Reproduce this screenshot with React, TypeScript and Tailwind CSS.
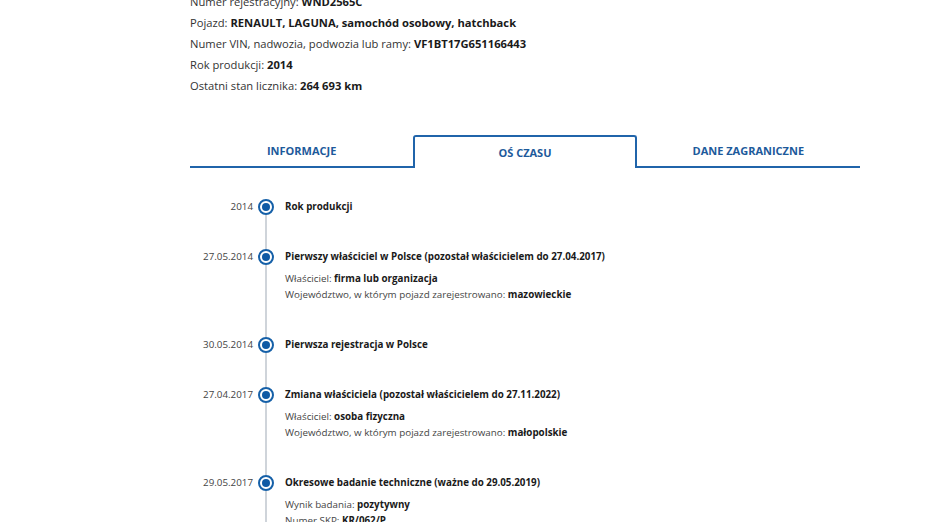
import React from "react";

type Detail = { label: string; value: string };
type Item = { date: string; title: string; details: Detail[] };

const items: Item[] = [
  { date: "2014", title: "Rok produkcji", details: [] },
  {
    date: "27.05.2014",
    title: "Pierwszy właściciel w Polsce (pozostał właścicielem do 27.04.2017)",
    details: [
      { label: "Właściciel: ", value: "firma lub organizacja" },
      { label: "Województwo, w którym pojazd zarejestrowano: ", value: "mazowieckie" },
    ],
  },
  { date: "30.05.2014", title: "Pierwsza rejestracja w Polsce", details: [] },
  {
    date: "27.04.2017",
    title: "Zmiana właściciela (pozostał właścicielem do 27.11.2022)",
    details: [
      { label: "Właściciel: ", value: "osoba fizyczna" },
      { label: "Województwo, w którym pojazd zarejestrowano: ", value: "małopolskie" },
    ],
  },
  {
    date: "29.05.2017",
    title: "Okresowe badanie techniczne (ważne do 29.05.2019)",
    details: [
      { label: "Wynik badania: ", value: "pozytywny" },
      { label: "Numer SKP: ", value: "KR/062/P" },
    ],
  },
];

const info: Detail[] = [
  { label: "Numer rejestracyjny: ", value: "WND2565C" },
  { label: "Pojazd: ", value: "RENAULT, LAGUNA, samochód osobowy, hatchback" },
  { label: "Numer VIN, nadwozia, podwozia lub ramy: ", value: "VF1BT17G651166443" },
  { label: "Rok produkcji: ", value: "2014" },
  { label: "Ostatni stan licznika: ", value: "264 693 km" },
];

export default function App() {
  return (
    <div
      className="w-[928px] h-[522px] overflow-hidden bg-white"
      style={{ fontFamily: '"Open Sans", "Noto Sans", sans-serif' }}
    >
      <div className="ml-[190px] w-[670px] -mt-[9px]">
        <div className="text-[11.2px] leading-[21px] text-[#333333]">
          {info.map((d) => (
            <div key={d.label}>
              {d.label}
              <span className="font-bold text-[#1a1a1a]">{d.value}</span>
            </div>
          ))}
        </div>

        <div className="mt-[39px] grid grid-cols-3 h-[33px] text-[11px] font-bold uppercase text-[#1d5a9b]">
          <div className="flex items-center justify-center border-b-2 border-[#2064aa] pt-[1px]">Informacje</div>
          <div className="flex items-center justify-center border-2 border-b-0 border-[#2064aa] rounded-t-[3px] pt-[2px]">
            Oś czasu
          </div>
          <div className="flex items-center justify-center border-b-2 border-[#2064aa] pt-[1px]">Dane zagraniczne</div>
        </div>

        <div className="mt-[31px]">
          {items.map((it, i) => (
            <div key={i} className="flex">
              <div className="w-[63px] shrink-0 text-right text-[9.8px] leading-4 text-[#444444]">{it.date}</div>
              <div className="ml-[5px] w-4 shrink-0 flex flex-col items-center">
                <div className="w-4 h-4 rounded-full border-2 border-[#1560a8] bg-white flex items-center justify-center">
                  <div className="w-2 h-2 rounded-full bg-[#0f5aa5]" />
                </div>
                <div className="w-[2px] flex-1 bg-[#cfd4da]" />
              </div>
              <div className="ml-[11px] pb-[34px] text-[9.8px] leading-4 text-[#222222]">
                <div className="font-bold text-[#1a1a1a]">{it.title}</div>
                {it.details.length > 0 && (
                  <div className="mt-[6px] text-[#444444]">
                    {it.details.map((d) => (
                      <div key={d.label}>
                        {d.label}
                        <span className="font-bold text-[#1a1a1a]">{d.value}</span>
                      </div>
                    ))}
                  </div>
                )}
              </div>
            </div>
          ))}
        </div>
      </div>
    </div>
  );
}
